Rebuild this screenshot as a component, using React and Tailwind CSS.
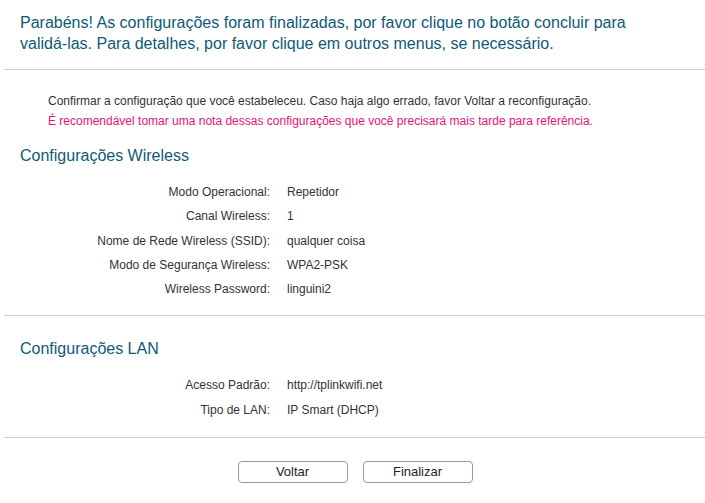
import React from 'react';

const wireless = [
  ['Modo Operacional:', 'Repetidor'],
  ['Canal Wireless:', '1'],
  ['Nome de Rede Wireless (SSID):', 'qualquer coisa'],
  ['Modo de Segurança Wireless:', 'WPA2-PSK'],
  ['Wireless Password:', 'linguini2'],
];

const lan = [
  ['Acesso Padrão:', 'http://tplinkwifi.net'],
  ['Tipo de LAN:', 'IP Smart (DHCP)'],
];

const Rows = ({ items }) => (
  <div className="flex flex-col">
    {items.map(([k, v]) => (
      <div key={k} className="flex h-[24.25px] items-center text-[12px] text-[#333]">
        <span className="w-[270px] text-right">{k}</span>
        <span className="pl-[17px]">{v}</span>
      </div>
    ))}
  </div>
);

export default function App() {
  return (
    <div className="w-[705px] h-[503px] bg-white overflow-hidden" style={{ fontFamily: '"Liberation Sans", Arial, sans-serif' }}>
      <div className="pl-[20px] pt-[12px] pb-[15px] text-[16px] leading-[21px] text-[#0e5a79]">
        Parabéns! As configurações foram finalizadas, por favor clique no botão concluir para<br />
        validá-las. Para detalhes, por favor clique em outros menus, se necessário.
      </div>
      <div className="ml-[4px] h-px bg-[#cccccc]" />
      <div className="pl-[48px] pt-[21px] text-[12px] leading-[20px]">
        <div className="text-[#333]">Confirmar a configuração que você estabeleceu. Caso haja algo errado, favor Voltar a reconfiguração.</div>
        <div className="text-[#e4137b]">É recomendável tomar uma nota dessas configurações que você precisará mais tarde para referência.</div>
      </div>
      <div className="pl-[20px] pt-[15px] pb-[14px] text-[16px] leading-[20px] text-[#0e5a79]">Configurações Wireless</div>
      <Rows items={wireless} />
      <div className="ml-[4px] mt-[14px] h-px bg-[#cccccc]" />
      <div className="pl-[20px] pt-[23px] pb-[14px] text-[16px] leading-[20px] text-[#0e5a79]">Configurações LAN</div>
      <Rows items={lan} />
      <div className="ml-[4px] mt-[15px] h-px bg-[#cccccc]" />
      <div className="flex justify-center gap-[15px] pt-[23px] pl-[5px]">
        <button className="w-[110px] h-[22px] rounded-[4px] border border-[#999] bg-white text-[13px] text-[#222]">Voltar</button>
        <button className="w-[110px] h-[22px] rounded-[4px] border border-[#999] bg-white text-[13px] text-[#222]">Finalizar</button>
      </div>
    </div>
  );
}
